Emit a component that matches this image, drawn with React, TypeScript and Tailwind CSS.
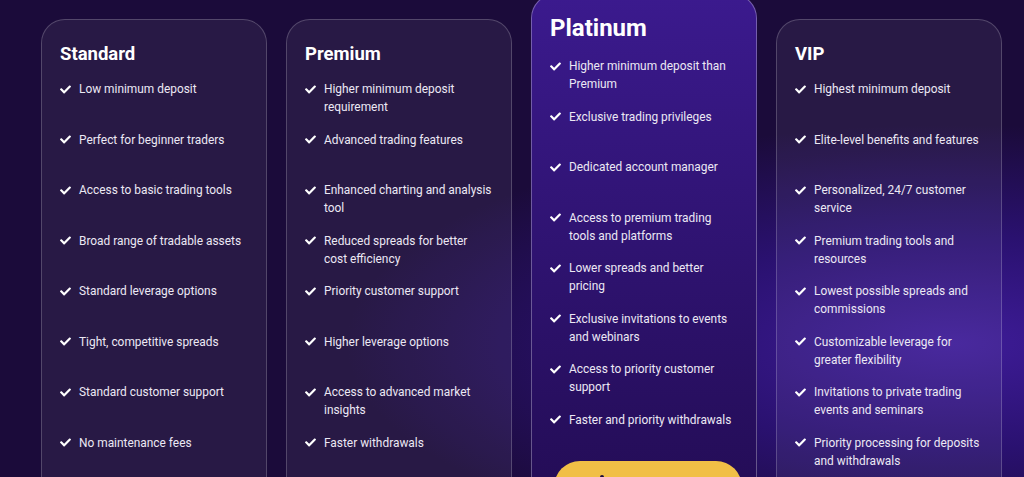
import React from "react";
import { FaCheck } from "react-icons/fa";

type Plan = { name: string; items: string[]; featured?: boolean };

const plans: Plan[] = [
  {
    name: "Standard",
    items: [
      "Low minimum deposit",
      "Perfect for beginner traders",
      "Access to basic trading tools",
      "Broad range of tradable assets",
      "Standard leverage options",
      "Tight, competitive spreads",
      "Standard customer support",
      "No maintenance fees",
    ],
  },
  {
    name: "Premium",
    items: [
      "Higher minimum deposit requirement",
      "Advanced trading features",
      "Enhanced charting and analysis tool",
      "Reduced spreads for better|cost efficiency",
      "Priority customer support",
      "Higher leverage options",
      "Access to advanced market insights",
      "Faster withdrawals",
    ],
  },
  {
    name: "Platinum",
    featured: true,
    items: [
      "Higher minimum deposit than Premium",
      "Exclusive trading privileges",
      "Dedicated account manager",
      "Access to premium trading tools and platforms",
      "Lower spreads and better pricing",
      "Exclusive invitations to events and webinars",
      "Access to priority customer support",
      "Faster and priority withdrawals",
    ],
  },
  {
    name: "VIP",
    items: [
      "Highest minimum deposit",
      "Elite-level benefits and features",
      "Personalized, 24/7 customer service",
      "Premium trading tools and resources",
      "Lowest possible spreads and commissions",
      "Customizable leverage for greater flexibility",
      "Invitations to private trading events and seminars",
      "Priority processing for deposits and withdrawals",
    ],
  },
];

function Item({ text }: { text: string }) {
  const parts = text.split("|");
  return (
    <li className="flex h-[36px] items-start">
      <span className="flex h-[18px] w-[19px] shrink-0 items-center text-white">
        <FaCheck size={11} />
      </span>
      <span className="text-[11.9px] leading-[18px] text-[#ece8f4]">
        {parts.map((p, i) => (
          <React.Fragment key={i}>
            {i > 0 && <br />}
            {p}
          </React.Fragment>
        ))}
      </span>
    </li>
  );
}

function Card({ plan }: { plan: Plan }) {
  if (plan.featured) {
    return (
      <div className="-mt-[25px] w-[226px] shrink-0 rounded-[24px] border border-white/30 bg-gradient-to-b from-[#3b1a8e] to-[#210b50] pl-[18px] pr-[17px] pt-[20px] pb-[40px]">
        <h2 className="text-[24px] font-bold leading-[26px] text-white">{plan.name}</h2>
        <ul className="mt-[16px] flex flex-col gap-[14.5px]">
          {plan.items.map((t) => (
            <Item key={t} text={t} />
          ))}
        </ul>
        <div className="relative mt-[14px] ml-[4px] h-[52px] w-[188px] rounded-full bg-[#f1bf46]">
          <span className="absolute left-[46px] top-[14px] h-[4px] w-[4px] rounded-full bg-[#1b0b3a]" />
        </div>
      </div>
    );
  }
  return (
    <div className="w-[226px] shrink-0 rounded-[24px] border border-white/20 bg-white/[0.06] pl-[18px] pr-[17px] pt-[20px] pb-[40px]">
      <h2 className="text-[18.5px] font-bold leading-[28px] text-white">{plan.name}</h2>
      <ul className="mt-[12px] flex flex-col gap-[14.5px]">
        {plan.items.map((t) => (
          <Item key={t} text={t} />
        ))}
      </ul>
    </div>
  );
}

export default function App() {
  return (
    <div className="h-[477px] w-[1024px] overflow-hidden bg-[#1b0b3a] bg-[radial-gradient(ellipse_at_93%_72%,#3e1c98_0%,#2a1170_22%,transparent_45%)] font-['Roboto',sans-serif]">
      <div className="flex items-start gap-[19px] pl-[41px] pt-[19px]">
        {plans.map((p) => (
          <Card key={p.name} plan={p} />
        ))}
      </div>
    </div>
  );
}
